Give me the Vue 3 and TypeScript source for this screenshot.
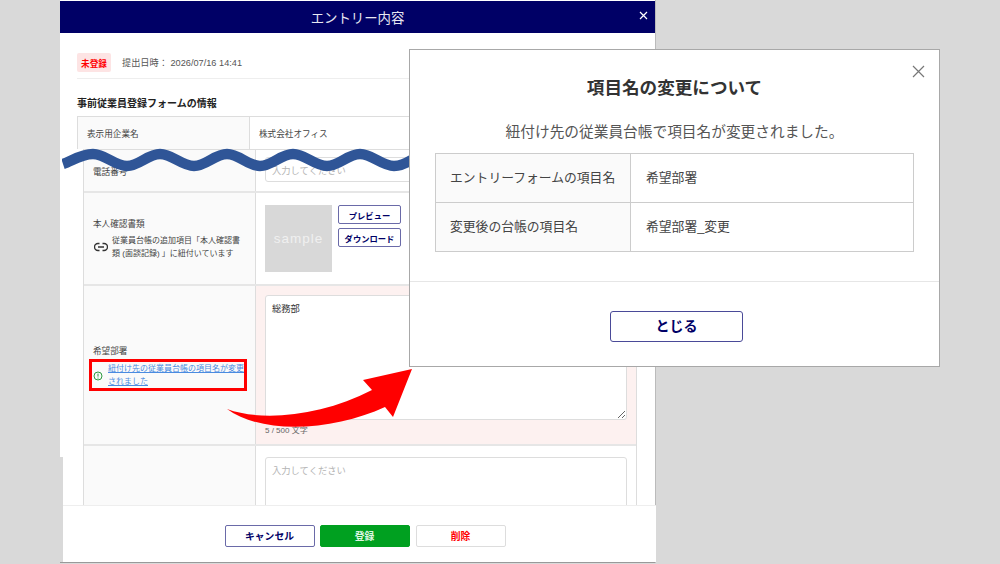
<template>
  <div class="stage">
    <section class="panel">
      <header class="panel-head">
        <span>エントリー内容</span>
        <svg class="panel-close" width="9" height="9" viewBox="0 0 9 9"><path d="M1 1l7 7M8 1L1 8" /></svg>
      </header>

      <div class="panel-body">
        <div class="status">
          <span class="badge">未登録</span>
          <span class="date">提出日時： 2026/07/16 14:41</span>
        </div>
        <h2 class="form-title">事前従業員登録フォームの情報</h2>

        <div class="table first">
          <div class="row row-company">
            <div class="label">表示用企業名</div>
            <div class="value">株式会社オフィス</div>
          </div>
        </div>

        <div class="table second">
          <div class="row row-phone">
            <div class="label">電話番号</div>
            <div class="value"><input class="field" placeholder="入力してください" /></div>
          </div>

          <div class="row row-doc">
            <div class="label">
              <div class="doc-name">本人確認書類</div>
              <div class="linked">
                <svg width="14" height="10" viewBox="0 0 14 10" fill="none" stroke="#333" stroke-width="1.4">
                  <path d="M5.5 1.5H4a3.5 3.5 0 0 0 0 7h1.5M8.5 1.5H10a3.5 3.5 0 0 1 0 7H8.5M4 5h6" />
                </svg>
                <span>従業員台帳の追加項目「本人確認書類 (面談記録) 」に紐付いています</span>
              </div>
            </div>
            <div class="value doc-value">
              <div class="thumb">sample</div>
              <div class="doc-buttons">
                <button v-for="name in docButtons" :key="name" class="doc-btn">{{ name }}</button>
              </div>
            </div>
          </div>

          <div class="row row-dept">
            <div class="label">
              <div class="dept-name">希望部署</div>
              <div class="notice">
                <svg width="10" height="10" viewBox="0 0 10 10" fill="none" stroke="#2e9b3f">
                  <circle cx="5" cy="5" r="4" />
                  <path d="M5 2.6v3M5 6.6v1" />
                </svg>
                <a class="notice-link">紐付け先の従業員台帳の項目名が変更されました</a>
              </div>
            </div>
            <div class="value dept-value">
              <textarea class="field area" :value="deptValue"></textarea>
              <div class="counter">5 / 500 文字</div>
            </div>
          </div>

          <div class="row row-last">
            <div class="label"></div>
            <div class="value"><textarea class="field area" placeholder="入力してください"></textarea></div>
          </div>
        </div>
      </div>

      <footer class="panel-foot">
        <button class="foot-btn cancel">キャンセル</button>
        <button class="foot-btn save">登録</button>
        <button class="foot-btn remove">削除</button>
      </footer>
      <div class="seam"></div>
    </section>

    <svg class="wave" width="360" height="40" viewBox="62 140 360 40" fill="none">
      <path d="M63 164C72 161 81 154 93 154C105 154 115 166 127 166S148 154 160 154S182 166 194 166S215 154 227 154S248 166 260 166S281 154 293 154S315 166 327 166S348 154 360 154S382 166 394 166S412 158 422 155" />
    </svg>

    <section class="modal">
      <svg class="modal-close" width="13" height="13" viewBox="0 0 13 13"><path d="M1 1l11 11M12 1L1 12" /></svg>
      <h2 class="modal-title">項目名の変更について</h2>
      <p class="modal-lead">紐付け先の従業員台帳で項目名が変更されました。</p>
      <div class="modal-table">
        <div v-for="item in renamedItems" :key="item.label" class="modal-row">
          <div class="modal-label">{{ item.label }}</div>
          <div class="modal-value">{{ item.value }}</div>
        </div>
      </div>
      <div class="modal-foot">
        <button class="close-btn">とじる</button>
      </div>
    </section>

    <div class="callout"></div>
    <svg class="arrow" width="190" height="75" viewBox="225 368 190 75">
      <path d="M227 409C262 422 322 416 372 390L363 380L412 369L393 417L385 407C335 430 265 436 227 409Z" />
    </svg>
  </div>
</template>

<script setup lang="ts">
interface RenamedItem {
  label: string;
  value: string;
}

const deptValue = '総務部';

const docButtons: string[] = ['プレビュー', 'ダウンロード'];

const renamedItems: RenamedItem[] = [
  { label: 'エントリーフォームの項目名', value: '希望部署' },
  { label: '変更後の台帳の項目名', value: '希望部署_変更' }
];
</script>

<style>
body {
  margin: 0;
}
</style>

<style scoped>
.stage {
  position: relative;
  width: 1000px;
  height: 564px;
  overflow: hidden;
  background: #d9d9d9;
  font-family: "Liberation Sans", "Noto Sans CJK JP", sans-serif;
  color: #444;
}

.panel {
  position: relative;
  display: flex;
  flex-direction: column;
  width: 595px;
  height: 563px;
  margin-left: 60px;
  padding-top: 1px;
  box-sizing: border-box;
  background: #fff;
  border-bottom: 1px solid #999;
  box-shadow: 1px 0 0 #bbb;
}

.panel-head {
  position: relative;
  flex: none;
  height: 32px;
  display: flex;
  align-items: center;
  justify-content: center;
  background: #000066;
  color: #e8e8f2;
  font-size: 13.4px;
}

.panel-close {
  position: absolute;
  right: 7px;
  top: 10px;
  fill: none;
  stroke: #fff;
  stroke-width: 1.2;
}

.panel-body {
  flex: 1;
  min-height: 0;
  overflow: hidden;
  padding: 20px 18px 0 17px;
}

.status {
  display: flex;
  align-items: center;
  gap: 11px;
  height: 19px;
  padding-bottom: 6px;
  border-bottom: 1px solid #eee;
}

.badge {
  width: 34px;
  height: 19px;
  display: flex;
  align-items: center;
  justify-content: center;
  border-radius: 2px;
  background: #fde4e4;
  color: #f00;
  font-size: 8.6px;
  font-weight: 700;
}

.date {
  margin-top: -1px;
  font-size: 9.2px;
  color: #555;
}

.form-title {
  margin: 0;
  height: 37px;
  padding-top: 9px;
  box-sizing: border-box;
  display: flex;
  align-items: center;
  color: #222;
  font-size: 10px;
  font-weight: 700;
}

.table {
  background: #fff;
}

.first {
  border-top: 1px solid #ddd;
  border-left: 1px solid #ddd;
}

.second {
  margin-left: 6px;
  border-top: 1px solid #ddd;
  border-left: 1px solid #ddd;
  border-right: 1px solid #ddd;
}

.row {
  display: grid;
  grid-template-columns: 172px 1fr;
  box-sizing: border-box;
  border-bottom: 2px solid #e6e6e6;
}

.first .row {
  border-bottom: 0;
}

.label {
  display: flex;
  flex-direction: column;
  justify-content: center;
  padding: 0 9px;
  background: #fafafa;
  border-right: 1px solid #ddd;
  font-size: 8.6px;
}

.value {
  min-width: 0;
  padding: 0 9px;
  font-size: 8.6px;
}

.row-company {
  height: 32px;
}

.row-company .value {
  display: flex;
  align-items: center;
}

.row-phone {
  height: 43px;
}

.row-phone .value {
  padding-top: 7px;
}

.field {
  display: block;
  width: 100%;
  box-sizing: border-box;
  border: 1px solid #ddd;
  border-radius: 3px;
  background: #fff;
  outline: none;
  font-family: "Noto Sans CJK JP", sans-serif;
  font-size: 9.3px;
  color: #333;
}

.field::placeholder {
  color: #b4b4b4;
}

.row-phone .field {
  height: 25px;
  padding: 0 6px;
}

.row-doc {
  height: 93px;
}

.doc-name {
  margin-bottom: 5px;
}

.linked {
  display: flex;
  align-items: center;
  gap: 4px;
  font-size: 8px;
  line-height: 13px;
}

.linked svg {
  flex: none;
  margin-left: 1px;
}

.doc-value {
  display: flex;
  gap: 6px;
  padding-top: 12px;
}

.thumb {
  width: 67px;
  height: 67px;
  display: flex;
  align-items: center;
  justify-content: center;
  background: #d8d8d8;
  color: #f0f0f0;
  font-size: 13.5px;
  letter-spacing: 1px;
}

.doc-buttons {
  display: flex;
  flex-direction: column;
  gap: 4px;
}

.doc-btn {
  width: 63px;
  height: 19px;
  padding: 0;
  border: 1px solid #6a6aa8;
  border-radius: 2px;
  background: #fff;
  color: #000066;
  font-family: inherit;
  font-size: 8.3px;
  font-weight: 700;
}

.row-dept {
  height: 160px;
}

.row-dept .label {
  justify-content: flex-start;
  padding-top: 58px;
}

.dept-name {
  margin-bottom: 7px;
}

.notice {
  display: flex;
  align-items: center;
  gap: 5px;
}

.notice svg {
  flex: none;
}

.notice-link {
  color: #4a8be0;
  font-size: 8px;
  line-height: 12.5px;
  text-decoration: underline;
}

.dept-value {
  padding-top: 9px;
  background: #fdf1f0;
}

.area {
  height: 125px;
  padding: 5px 6px;
  resize: vertical;
}

.counter {
  margin-top: 4px;
  font-size: 8px;
  color: #666;
}

.row-last .value {
  padding-top: 11px;
  height: 120px;
}

.row-last .area {
  height: 110px;
}

.panel-foot {
  flex: none;
  display: flex;
  justify-content: center;
  gap: 5px;
  height: 57px;
  margin: 0 -1px 0 3px;
  padding: 19px 0 0 11px;
  box-sizing: border-box;
  background: #fff;
  border-top: 1px solid #eee;
}

.seam {
  position: absolute;
  left: 0;
  top: 457px;
  bottom: 0;
  width: 3px;
  background: #d9d9d9;
}

.foot-btn {
  width: 90px;
  height: 22px;
  padding: 0;
  border-radius: 2px;
  font-family: inherit;
  font-size: 9.8px;
  font-weight: 700;
}

.cancel {
  border: 1px solid #6a6aa8;
  background: #fff;
  color: #000066;
}

.save {
  border: 1px solid #00a020;
  background: #00a020;
  color: #dff5e2;
}

.remove {
  margin-left: 1px;
  border: 1px solid #ddd;
  background: #fff;
  color: #f00;
}

.wave {
  position: absolute;
  left: 62px;
  top: 140px;
  stroke: #2f5597;
  stroke-width: 10.5;
}

.modal {
  position: absolute;
  left: 409px;
  top: 49px;
  width: 531px;
  height: 318px;
  box-sizing: border-box;
  background: #fff;
  border: 1px solid #a8a8a8;
}

.modal-close {
  position: absolute;
  right: 14px;
  top: 15px;
  fill: none;
  stroke: #777;
  stroke-width: 1.2;
}

.modal-title {
  margin: 26px 0 0;
  height: 24px;
  line-height: 24px;
  text-align: center;
  color: #333;
  font-size: 17.6px;
  font-weight: 700;
}

.modal-lead {
  margin: 22px 0 0;
  height: 20px;
  line-height: 20px;
  text-align: center;
  color: #555;
  font-size: 14.7px;
}

.modal-table {
  margin: 11px 25px 0;
  border: 1px solid #ccc;
  border-bottom: 0;
}

.modal-row {
  display: grid;
  grid-template-columns: 195px 1fr;
  height: 49px;
  box-sizing: border-box;
  border-bottom: 1px solid #ccc;
  font-size: 12.8px;
  line-height: 48px;
}

.modal-label {
  padding-left: 14px;
  background: #fafafa;
  border-right: 1px solid #ccc;
}

.modal-value {
  padding-left: 15px;
}

.modal-foot {
  display: flex;
  justify-content: center;
  margin-top: 29px;
  padding: 29px 0 0 4px;
  border-top: 1px solid #e6e6e6;
}

.close-btn {
  width: 133px;
  height: 31px;
  padding: 0 0 3px;
  border: 1px solid #4a4a98;
  border-radius: 3px;
  background: #fff;
  color: #000066;
  font-family: inherit;
  font-size: 14px;
  font-weight: 700;
}

.callout {
  position: absolute;
  left: 89px;
  top: 359px;
  width: 158px;
  height: 32px;
  box-sizing: border-box;
  border: 3px solid #f00;
}

.arrow {
  position: absolute;
  left: 225px;
  top: 368px;
  fill: #f00;
}
</style>
